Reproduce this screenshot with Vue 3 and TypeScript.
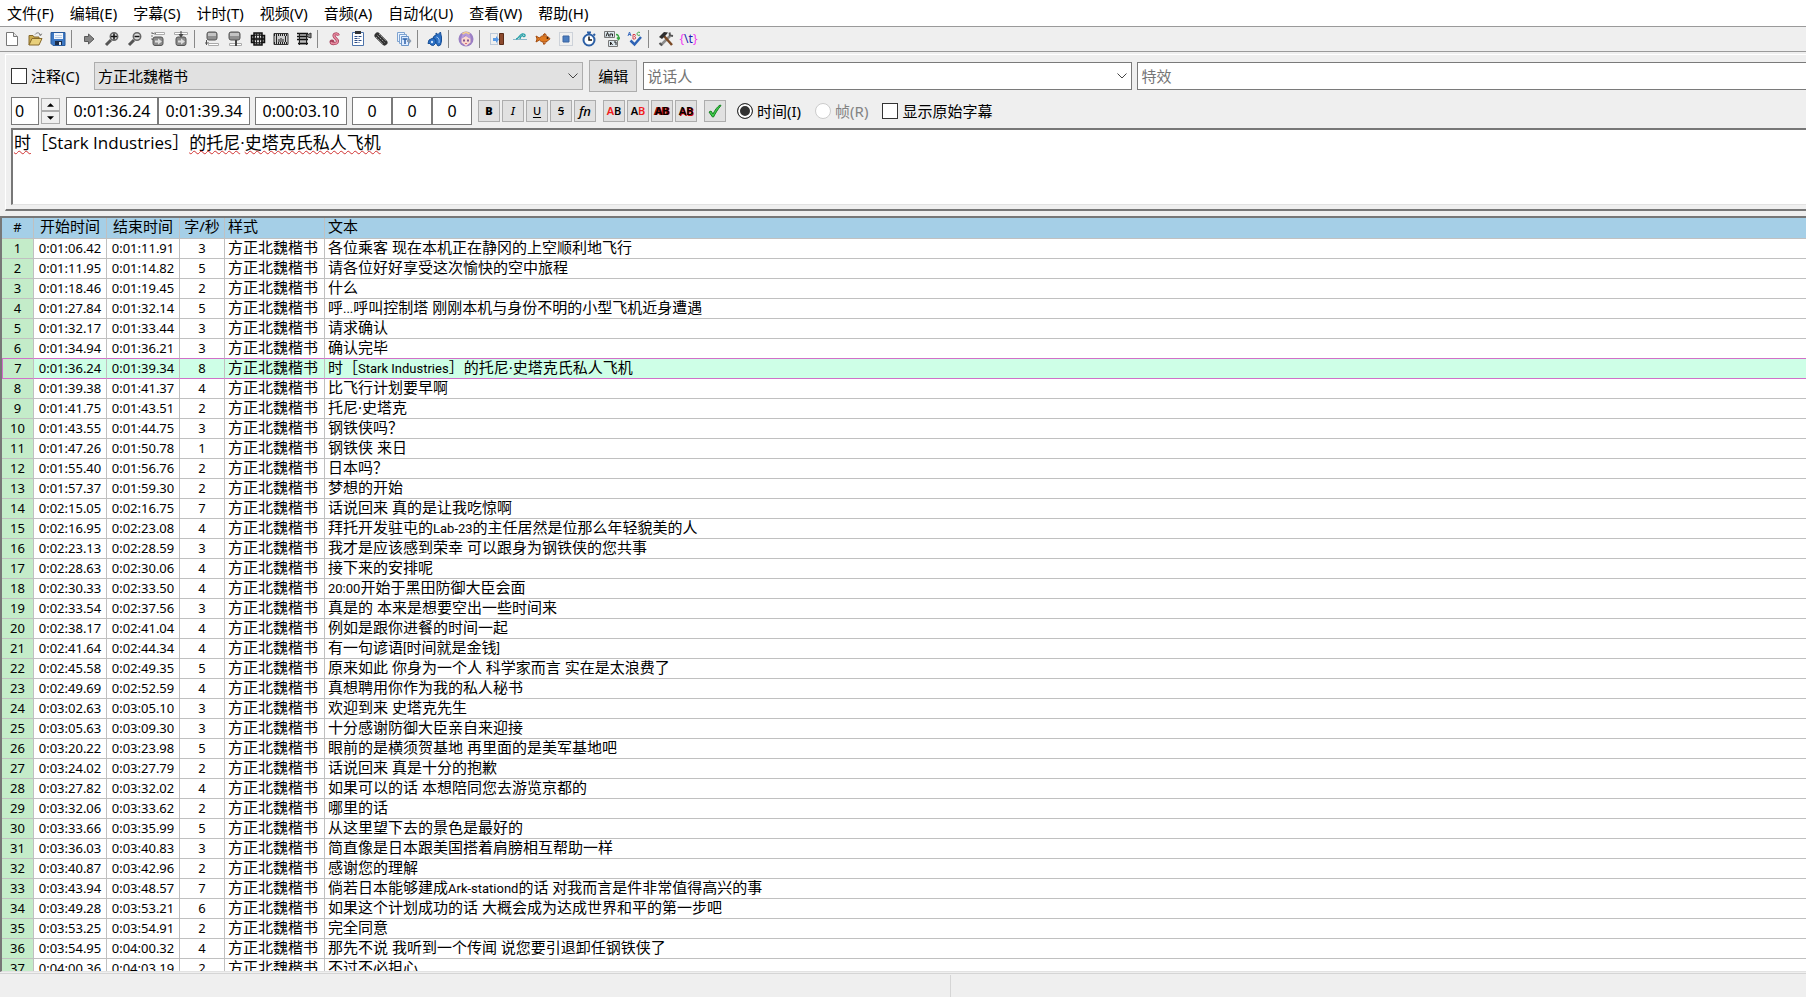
<script setup lang="ts">
import { computed, ref } from 'vue'

interface Line {
  start: string
  end: string
  cps: number
  text: string
}

interface Run {
  text: string
  latin: boolean
}

const STYLE_NAME = '方正北魏楷书'

const menus: string[] = ['文件(F)', '编辑(E)', '字幕(S)', '计时(T)', '视频(V)', '音频(A)', '自动化(U)', '查看(W)', '帮助(H)']

const raw: [string, string, number, string][] = [
  ['0:01:06.42', '0:01:11.91', 3, '各位乘客 现在本机正在静冈的上空顺利地飞行'],
  ['0:01:11.95', '0:01:14.82', 5, '请各位好好享受这次愉快的空中旅程'],
  ['0:01:18.46', '0:01:19.45', 2, '什么'],
  ['0:01:27.84', '0:01:32.14', 5, '呼...呼叫控制塔 刚刚本机与身份不明的小型飞机近身遭遇'],
  ['0:01:32.17', '0:01:33.44', 3, '请求确认'],
  ['0:01:34.94', '0:01:36.21', 3, '确认完毕'],
  ['0:01:36.24', '0:01:39.34', 8, '时［Stark Industries］的托尼·史塔克氏私人飞机'],
  ['0:01:39.38', '0:01:41.37', 4, '比飞行计划要早啊'],
  ['0:01:41.75', '0:01:43.51', 2, '托尼·史塔克'],
  ['0:01:43.55', '0:01:44.75', 3, '钢铁侠吗？'],
  ['0:01:47.26', '0:01:50.78', 1, '钢铁侠 来日'],
  ['0:01:55.40', '0:01:56.76', 2, '日本吗？'],
  ['0:01:57.37', '0:01:59.30', 2, '梦想的开始'],
  ['0:02:15.05', '0:02:16.75', 7, '话说回来 真的是让我吃惊啊'],
  ['0:02:16.95', '0:02:23.08', 4, '拜托开发驻屯的Lab-23的主任居然是位那么年轻貌美的人'],
  ['0:02:23.13', '0:02:28.59', 3, '我才是应该感到荣幸 可以跟身为钢铁侠的您共事'],
  ['0:02:28.63', '0:02:30.06', 4, '接下来的安排呢'],
  ['0:02:30.33', '0:02:33.50', 4, '20:00开始于黑田防御大臣会面'],
  ['0:02:33.54', '0:02:37.56', 3, '真是的 本来是想要空出一些时间来'],
  ['0:02:38.17', '0:02:41.04', 4, '例如是跟你进餐的时间一起'],
  ['0:02:41.64', '0:02:44.34', 4, '有一句谚语[时间就是金钱]'],
  ['0:02:45.58', '0:02:49.35', 5, '原来如此 你身为一个人 科学家而言 实在是太浪费了'],
  ['0:02:49.69', '0:02:52.59', 4, '真想聘用你作为我的私人秘书'],
  ['0:03:02.63', '0:03:05.10', 3, '欢迎到来 史塔克先生'],
  ['0:03:05.63', '0:03:09.30', 3, '十分感谢防御大臣亲自来迎接'],
  ['0:03:20.22', '0:03:23.98', 5, '眼前的是横须贺基地 再里面的是美军基地吧'],
  ['0:03:24.02', '0:03:27.79', 2, '话说回来 真是十分的抱歉'],
  ['0:03:27.82', '0:03:32.02', 4, '如果可以的话 本想陪同您去游览京都的'],
  ['0:03:32.06', '0:03:33.62', 2, '哪里的话'],
  ['0:03:33.66', '0:03:35.99', 5, '从这里望下去的景色是最好的'],
  ['0:03:36.03', '0:03:40.83', 3, '简直像是日本跟美国搭着肩膀相互帮助一样'],
  ['0:03:40.87', '0:03:42.96', 2, '感谢您的理解'],
  ['0:03:43.94', '0:03:48.57', 7, '倘若日本能够建成Ark-stationd的话 对我而言是件非常值得高兴的事'],
  ['0:03:49.28', '0:03:53.21', 6, '如果这个计划成功的话 大概会成为达成世界和平的第一步吧'],
  ['0:03:53.25', '0:03:54.91', 2, '完全同意'],
  ['0:03:54.95', '0:04:00.32', 4, '那先不说 我听到一个传闻 说您要引退卸任钢铁侠了'],
  ['0:04:00.36', '0:04:03.19', 2, '不过不必担心'],
]

const lines: Line[] = raw.map(([start, end, cps, text]) => ({ start, end, cps, text }))
const selected = ref(6)

const isComment = ref(false)
const showOriginal = ref(false)
const timeMode = ref('time')
const layer = ref('0')
const start = ref('0:01:36.24')
const end = ref('0:01:39.34')
const duration = ref('0:00:03.10')
const margins = ref(['0', '0', '0'])
const marginNames = ['左边距', '右边距', '垂直边距']
const editText = ref(lines[6].text)

// Latin runs are set smaller than the Chinese text around them.
function runs(text: string): Run[] {
  return (text.match(/[\x21-\x7e]+( [\x21-\x7e]+)*|[^\x21-\x7e]+/g) ?? []).map((t) => ({
    text: t,
    latin: /^[\x21-\x7e]/.test(t),
  }))
}

const spelling = computed(() =>
  (editText.value.match(/[\u4e00-\u9fff]+|[^\u4e00-\u9fff]+/g) ?? []).map((t) => ({
    text: t,
    bad: /^[\u4e00-\u9fff]/.test(t),
  })),
)

function select(i: number) {
  selected.value = i
  start.value = lines[i].start
  end.value = lines[i].end
  editText.value = lines[i].text
}

function step(d: number) {
  layer.value = String(Math.max(0, Number(layer.value) + d))
}
</script>

<template>
  <div class="app">
    <nav class="menubar">
      <button v-for="m in menus" :key="m" class="menu" type="button">{{ m }}</button>
    </nav>

    <div class="toolbar" role="toolbar">
      <button type="button" aria-label="新建"><svg viewBox="0 0 16 16"><path d="M2.500 1.500h7l4 4v9h-11z" fill="#fff" stroke="#777" /><path d="M9.500 1.500v4h4" fill="#e4e4e4" stroke="#777" /></svg></button>
      <button type="button" aria-label="打开"><svg viewBox="0 0 16 16"><path d="M2 14V4.500h4l1 1.500h5v2" fill="#c9a94c" stroke="#86692a" /><path d="M2 14l3-6.500h10L12 14z" fill="#e8cf7a" stroke="#86692a" /><path d="M8 3.500c2-2.500 4.500-2 5.500.5M12 3.500l1.700 1 1-1.800" fill="none" stroke="#777" /></svg></button>
      <button type="button" aria-label="保存"><svg viewBox="0 0 16 16"><path d="M1 1.500h14v13H3l-2-2z" fill="#3c78c4" stroke="#285a9c" /><path d="M4 2h9v6H4z" fill="#f2f6fb" /><path d="M5 4.500h7M5 6.500h7" stroke="#b9cde6" /><path d="M5 10h7v4H5z" fill="#1d2d48" /><path d="M9 11h2v3H9z" fill="#dfe8f2" /></svg></button>
      <i class="sep"></i>
      <button type="button" aria-label="跳转"><svg viewBox="0 0 16 16"><path d="M3.500 5.500h4V3l5.500 5-5.500 5v-2.500h-4z" fill="#858585" stroke="#5a5a5a" /></svg></button>
      <button type="button" aria-label="放大"><svg viewBox="0 0 16 16"><path d="M2 14l5-5" stroke="#555" stroke-width="3" /><circle cx="10" cy="5.500" r="3.700" fill="#ddd" stroke="#666" stroke-width="1.500" /><path d="M10 2.500v6M7 5.500h6" stroke="#111" stroke-width="1.500" /></svg></button>
      <button type="button" aria-label="缩小"><svg viewBox="0 0 16 16"><path d="M2 14l5-5" stroke="#555" stroke-width="3" /><circle cx="10" cy="5.500" r="3.700" fill="#ddd" stroke="#666" stroke-width="1.500" /><path d="M7.500 5.500h5" stroke="#111" stroke-width="1.500" /></svg></button>
      <button type="button" aria-label="跳到开始"><svg viewBox="0 0 16 16"><path d="M4.500 1.500h10v2h-10z" fill="#fff" stroke="#aaa" /><path d="M2 1v9M2 2.500h4M2 8.500h3" stroke="#777" stroke-dasharray="2 1" fill="none" /><rect x="3" y="6" width="10" height="8.500" rx="2" fill="#8b8b8b" stroke="#555" /><path d="M5 9.500h3v-2l4 3-4 3v-2H5z" fill="#ddd" /></svg></button>
      <button type="button" aria-label="跳到结束"><svg viewBox="0 0 16 16"><path d="M1.500 1.500h13v2h-13z" fill="#fff" stroke="#aaa" /><path d="M8 0v5M6 3l2 3 2-3" stroke="#444" fill="#444" /><rect x="3" y="6" width="10" height="8.500" rx="2" fill="#8b8b8b" stroke="#555" /><path d="M5 9.500h3v-2l4 3-4 3v-2H5z" fill="#ddd" /></svg></button>
      <i class="sep"></i>
      <button type="button" aria-label="开始对齐视频"><svg viewBox="0 0 16 16"><rect x="3" y="1" width="10" height="8" rx="2" fill="#909090" stroke="#555" /><path d="M4 2h8v3H4z" fill="#c4c4c4" /><path d="M2.500 9v5M1 12h4" stroke="#555" fill="none" /><path d="M4.500 12.500h10v2h-10z" fill="#fff" stroke="#aaa" /></svg></button>
      <button type="button" aria-label="结束对齐视频"><svg viewBox="0 0 16 16"><rect x="2" y="1" width="11" height="8" rx="2" fill="#909090" stroke="#555" /><path d="M3 2h9v3H3z" fill="#c4c4c4" /><path d="M2.500 12.500h12v2h-12z" fill="#fff" stroke="#aaa" /><path d="M9 9v6" stroke="#444" stroke-width="2" /></svg></button>
      <button type="button" aria-label="选择可见"><svg viewBox="0 0 16 16"><path d="M1.500 4.500h13v7h-13zM4 2h8v12H4z" fill="#999" stroke="#111" stroke-width="1.500" /><path d="M5 5.500h6M5 10.500h6" stroke="#ddd" stroke-width="1.500" /><path d="M2 8h12" stroke="#111" stroke-width="1.500" /><path d="M6.500 2v12M9.500 2v12" stroke="#222" /></svg></button>
      <button type="button" aria-label="对齐场景"><svg viewBox="0 0 16 16"><path d="M1 2.500h14v11H1z" fill="#ccc" stroke="#333" /><path d="M1 4h14M1 12h14" stroke="#222" stroke-width="2" stroke-dasharray="1 1" /><path d="M3.500 5v6M6 8v3M8 7v4M10 8v3M12.500 5v6" stroke="#222" /></svg></button>
      <button type="button" aria-label="平移到视频"><svg viewBox="0 0 16 16"><path d="M2.500 2h9v12h-9z" fill="#bbb" /><path d="M1 2.500h11M1 5.500h11M1 8.500h11M2 12.500h10" stroke="#111" stroke-width="1.500" /><path d="M3.500 2v12M10.500 2v12" stroke="#222" /><path d="M11 4l4-2v5l-3-1" fill="#888" stroke="#333" /></svg></button>
      <i class="sep"></i>
      <button type="button" aria-label="样式管理"><svg viewBox="0 0 16 16"><path d="M11.500 4.500c-1-2.500-5-2-4.500.5s4 3 3.500 5.500-6 3-6.500.5c0-1.500 2-1.500 2 0" fill="none" stroke="#a8405a" stroke-width="3" /><path d="M11.500 4.500c-1-2.500-5-2-4.500.5s4 3 3.500 5.500-6 3-6.500.5" fill="none" stroke="#e78aa0" stroke-width="1.500" /></svg></button>
      <button type="button" aria-label="属性"><svg viewBox="0 0 16 16"><path d="M2.500 1.500h11v13h-11z" fill="#fff" stroke="#4d73aa" /><path d="M5 0h6v3H5z" fill="#333" /><path d="M4.500 5.500h7M4.500 7.500h5M4.500 9.500h7M4.500 11.500h5" stroke="#2d4d86" stroke-dasharray="3 1" /></svg></button>
      <button type="button" aria-label="附件"><svg viewBox="0 0 16 16"><path d="M4.500 4.500l7 7" stroke="#333" stroke-width="6" stroke-linecap="round" /><path d="M4.500 4.500l7 7M6 3l7 7M3 6l7 7" stroke="#999" stroke-dasharray="2 1" /></svg></button>
      <button type="button" aria-label="字体收集"><svg viewBox="0 0 16 16"><path d="M1.500 1.500h7v9h-7z" fill="#eaf3ff" stroke="#7ea3d0" /><path d="M3.500 3.500h7v9h-7z" fill="#eaf3ff" stroke="#7ea3d0" /><path d="M5.500 5.500h7v9h-7z" fill="#dfecff" stroke="#6b94c7" /><path d="M6.500 8h5M9 8v5" stroke="#2c62ac" stroke-width="1.500" /><path d="M11 9h2V7l2.500 3-2.500 3v-2h-2z" fill="#8a9bb0" /></svg></button>
      <i class="sep"></i>
      <button type="button" aria-label="自动化"><svg viewBox="0 0 16 16"><g fill="#2a6fc4" stroke="#174e96" stroke-linejoin="round"><path d="M7 5l2-.5V2l2 1.500L13.500 1l.5 3 .5 2v4l-1 4-2.500 1-2-3-3-4z" /><path d="M2 9l2-1 2-1 2 1 1 2-.5 2.500-2 2-2.500-.5-1-1.500H1z" /></g><circle cx="5" cy="11" r="1.200" fill="#cfe3fb" /><path d="M9.500 6c2.500.5 3 3 2.500 6" fill="none" stroke="#9cc5f5" /></svg></button>
      <i class="sep"></i>
      <button type="button" aria-label="字幕助手"><svg viewBox="0 0 16 16"><circle cx="8" cy="8" r="7.500" fill="#9b7fc4" /><path d="M3.500 7.500L8 5l4.500 2.500v4L8 15l-4.500-3.500z" fill="#fbd9cf" /><path d="M4 2l4-1.500L12 2l-1 2H5z" fill="#f4d089" /><path d="M3 8c2-1 3-2 4-4 2 2 4 3 6 4l-1-4-4-2-4 2z" fill="#b79bdc" /><path d="M6 8.500v2M10 8.500v2" stroke="#5a2a7a" stroke-width="1.500" /><path d="M7 12.500h2" stroke="#d46b7b" /></svg></button>
      <i class="sep"></i>
      <button type="button" aria-label="时间平移"><svg viewBox="0 0 16 16"><path d="M1.500 2.500h7v11h-7z" fill="none" stroke="#8aa5c4" stroke-dasharray="1 1" /><path d="M4 7h3V5l3 3.500L7 12v-2H4z" fill="#5a9be6" /><path d="M10.500 2.500h4v11h-4z" fill="#8c4a2e" stroke="#5b2c18" /></svg></button>
      <button type="button" aria-label="波形处理"><svg viewBox="0 0 16 16"><path d="M1 8.500h14" stroke="#8bb7c9" /><path d="M4 8c3 0 3-4 6-5 2.500-.5 3.500 1 3 2-.5 1-2.500.5-2-.5M8 8c0-2 1-3 3-4" fill="none" stroke="#28a0a8" stroke-width="1.300" /></svg></button>
      <button type="button" aria-label="卡拉OK模板"><svg viewBox="0 0 16 16"><path d="M1 5l3.500 2c2-3 7-3.500 10.500.7-3.500 4.300-8 4.300-10.500 1.300L1 11l1-3z" fill="#e07a20" stroke="#a34c10" /><path d="M8 4l2-1.500 1.500 2M8 11.500l1 2 2-2" fill="#c8601a" stroke="#a34c10" /><circle cx="12.500" cy="7" r="1" fill="#3a1a05" /></svg></button>
      <button type="button" aria-label="分辨率"><svg viewBox="0 0 16 16"><path d="M1.500 1.500h13v13h-13z" fill="#f0f0f0" stroke="#aab4c2" stroke-dasharray="1 1" /><path d="M5 5h6v6H5z" fill="#4a7dc0" stroke="#3a64a0" /></svg></button>
      <button type="button" aria-label="后续计时"><svg viewBox="0 0 16 16"><circle cx="8" cy="9" r="5.500" fill="#fff" stroke="#2c5fa5" stroke-width="2" /><path d="M6 1.500h4M8 1v3M12.500 3l1.500 1.500" stroke="#2c5fa5" stroke-width="2" /><path d="M8 5.500V9h3" fill="none" stroke="#111" stroke-width="1.500" /></svg></button>
      <button type="button" aria-label="翻译助手"><svg viewBox="0 0 16 16"><path d="M.5.5h10v6H.5zM4.500 9.500h9v6h-9z" fill="#dce6ec" stroke="#777" /><path d="M2 5.500l1.500-4L5 5.500M6 5.500V3h2.500v2.500M6.500 14v-3l2 3M10 11h2v3" stroke="#222" fill="none" /><path d="M12 3.500c2 0 3 1.500 2.500 4.500M13 6.500l1.500 2 1.500-2" fill="none" stroke="#39a845" stroke-width="1.500" /></svg></button>
      <button type="button" aria-label="拼写检查"><svg viewBox="0 0 16 16"><path d="M3.500 9.500l4 4L14 6" fill="none" stroke="#2d62b5" stroke-width="2.500" /><path d="M1 5l1.500-4L4 5M1.500 3.500h2" stroke="#3a6cc0" fill="none" /><path d="M6 8V3.500h2c1 1 0 2-.5 2 1.500.5 1.500 2.500 0 2.500z" stroke="#d5404a" fill="none" /><path d="M13 1.500c-2-1-3 .5-3 1.500s1.500 2 3 1" stroke="#3fa548" fill="none" /></svg></button>
      <i class="sep"></i>
      <button type="button" aria-label="选项"><svg viewBox="0 0 16 16"><path d="M3 14L12 5" stroke="#8c8c8c" stroke-width="2.500" /><path d="M6 5l8 9" stroke="#7a4a26" stroke-width="2.500" /><path d="M1 6l5-5 4 .5L8 4 4 8z" fill="#2e2e2e" /><path d="M11.500 1.500L12 4.500l3 .5M1.500 12l2.500 2.500" fill="none" stroke="#555" stroke-width="2" /></svg></button>
      <button type="button" class="tag" aria-label="切换标签隐藏"><b>{</b>\t<b>}</b></button>
    </div>

    <section class="editor">
      <div class="fields">
        <label class="check comment"><input v-model="isComment" type="checkbox" />注释(C)</label>
        <div class="combo grey">
          <select aria-label="样式"><option>{{ STYLE_NAME }}</option></select>
          <svg class="chev" viewBox="0 0 10 6"><path d="M.5.5L5 5 9.500.5" /></svg>
        </div>
        <button class="edit" type="button">编辑</button>
        <div class="combo">
          <input type="text" placeholder="说话人" aria-label="说话人" />
          <svg class="chev" viewBox="0 0 10 6"><path d="M.5.5L5 5 9.500.5" /></svg>
        </div>
        <input class="effect" type="text" placeholder="特效" aria-label="特效" />
      </div>

      <div class="fields controls">
        <input v-model="layer" class="box layer" type="text" aria-label="层" />
        <div class="spin">
          <button type="button" aria-label="增加" @click="step(1)"><svg viewBox="0 0 8 4"><path d="M0 4l4-4 4 4z" /></svg></button>
          <button type="button" aria-label="减少" @click="step(-1)"><svg viewBox="0 0 8 4"><path d="M0 0l4 4 4-4z" /></svg></button>
        </div>
        <div class="group">
          <input v-model="start" class="box time" type="text" aria-label="开始时间" />
          <input v-model="end" class="box time" type="text" aria-label="结束时间" />
        </div>
        <div class="group">
          <input v-model="duration" class="box time" type="text" aria-label="持续时间" />
        </div>
        <div class="group">
          <input v-for="(n, i) in marginNames" :key="n" v-model="margins[i]" class="box margin" type="text" :aria-label="n" />
        </div>
        <div class="formats">
          <button type="button" class="bold">B</button>
          <button type="button" class="italic">I</button>
          <button type="button" class="under">U</button>
          <button type="button" class="strike">S</button>
          <button type="button" class="fn">fn</button>
        </div>
        <div class="formats">
          <button type="button"><em>A</em>B</button>
          <button type="button">A<em>B</em></button>
          <button type="button" class="glow">AB</button>
          <button type="button" class="shade">AB</button>
        </div>
        <div class="formats commit">
          <button type="button" aria-label="提交"><svg viewBox="0 0 14 14"><path d="M1 8l2-1 2 3c2-4 4-7 7-9l1 .5C10 5 7.500 9 5.500 13h-1z" fill="#3fce4b" stroke="#14801f" /></svg></button>
        </div>
        <label class="check first"><input v-model="timeMode" type="radio" name="mode" value="time" />时间(I)</label>
        <label class="check off"><input v-model="timeMode" type="radio" name="mode" value="frame" disabled />帧(R)</label>
        <label class="check"><input v-model="showOriginal" type="checkbox" />显示原始字幕</label>
      </div>

      <div class="textbox">
        <textarea v-model="editText" aria-label="字幕文本" spellcheck="false"></textarea>
        <div class="marks" aria-hidden="true"><span v-for="(s, i) in spelling" :key="i" :class="{ bad: s.bad }">{{ s.text }}</span></div>
      </div>
    </section>

    <main class="grid">
      <table>
        <colgroup>
          <col class="c-num" /><col class="c-time" /><col class="c-time" /><col class="c-cps" /><col class="c-style" /><col />
        </colgroup>
        <thead>
          <tr>
            <th class="mid small">#</th>
            <th class="mid">开始时间</th>
            <th class="mid">结束时间</th>
            <th class="mid">字/秒</th>
            <th>样式</th>
            <th>文本</th>
          </tr>
        </thead>
        <tbody>
          <tr v-for="(l, i) in lines" :key="i" :class="{ selected: i === selected }" @click="select(i)">
            <td class="num mid small">{{ i + 1 }}</td>
            <td class="mid small">{{ l.start }}</td>
            <td class="mid small">{{ l.end }}</td>
            <td class="mid small">{{ l.cps }}</td>
            <td>{{ STYLE_NAME }}</td>
            <td><span v-for="(r, k) in runs(l.text)" :key="k" :class="{ latin: r.latin }">{{ r.text }}</span></td>
          </tr>
        </tbody>
      </table>
    </main>

    <footer class="status"><span></span><span></span></footer>
  </div>
</template>

<style>
html,
body {
  margin: 0;
  overflow: hidden;
}
</style>

<style scoped>
.app {
  display: flex;
  flex-direction: column;
  height: 100vh;
  background: #efefef;
  color: #000;
  font: 15px/20px "Noto Sans", "Noto Sans CJK SC", sans-serif;
}

.app *,
.app *::before {
  box-sizing: border-box;
}

button,
input,
select,
textarea {
  margin: 0;
  padding: 0;
  border: 0;
  border-radius: 0;
  outline: none;
  background: none;
  color: inherit;
  font: inherit;
}

.menubar {
  display: flex;
  flex: none;
  height: 27px;
  background: #fff;
  border-bottom: 1px solid #9a9a9a;
}

.menu {
  padding: 3px 9px 3px 7px;
}

.toolbar {
  display: flex;
  flex: none;
  align-items: center;
  height: 25px;
  border-bottom: 1px solid #9a9a9a;
}

.toolbar button {
  display: flex;
  flex: none;
  align-items: center;
  justify-content: center;
  width: 23px;
  height: 24px;
}

.toolbar svg {
  width: 16px;
  height: 16px;
}

.toolbar .tag {
  color: #1a1ab0;
  font-size: 12px;
}

.tag b {
  color: #f03cf0;
  font-weight: 400;
}

.sep {
  flex: none;
  width: 8px;
  height: 18px;
}

.sep::before {
  display: block;
  width: 1px;
  height: 18px;
  margin-left: 2px;
  background: #888;
  content: "";
}

.editor {
  flex: none;
  margin: 2px 0 5px 5px;
  padding: 5px 0 4px 5px;
  border-top: 1px solid #fff;
  border-left: 1px solid #fff;
  border-bottom: 2px solid #777;
}

.fields {
  display: flex;
  align-items: center;
}

.check {
  display: flex;
  align-items: center;
  gap: 4px;
  margin-right: 14px;
}

.check input {
  width: 16px;
  height: 16px;
  appearance: none;
  background: #fff;
  border: 1px solid #333;
}

.check input[type="radio"] {
  border-radius: 50%;
}

.check input:checked {
  background: #333;
  box-shadow: inset 0 0 0 2px #fff;
}

.check input:disabled {
  border-color: #ccc;
}

.off {
  color: #838383;
}

.comment {
  width: 83px;
  margin: 0;
}

.combo {
  position: relative;
  display: flex;
  flex: 489 1 0;
  height: 28px;
  background: #fff;
  border: 1px solid #7a7a7a;
}

.grey {
  background: #e1e1e1;
  border-color: #adadad;
}

.combo select,
.combo input {
  flex: 1;
  min-width: 0;
  padding: 0 3px;
  appearance: none;
}

.chev {
  position: absolute;
  top: 10px;
  right: 4px;
  width: 10px;
  height: 6px;
  fill: none;
  stroke: #444;
  pointer-events: none;
}

::placeholder {
  color: #757575;
  opacity: 1;
}

.edit {
  width: 48px;
  height: 32px;
  margin: 0 6px;
  background: #e1e1e1;
  border: 1px solid #adadad;
}

.effect {
  flex: 664 1 0;
  min-width: 0;
  height: 28px;
  margin-left: 5px;
  padding: 0 3px;
  background: #fff;
  border: 1px solid #7a7a7a;
  border-right: 0;
}

.controls {
  margin: 5px 0 3px;
}

.box {
  height: 28px;
  background: #fff;
  border: 1px solid #7a7a7a;
  font-size: 16px;
}

.layer {
  width: 28px;
  padding-left: 3px;
}

.spin {
  display: flex;
  flex-direction: column;
  width: 19px;
  margin: 0 6px 0 2px;
}

.spin button {
  display: flex;
  align-items: center;
  justify-content: center;
  height: 13px;
  background: #f0f0f0;
  border: 1px solid #adadad;
}

.spin svg {
  width: 7px;
  height: 4px;
}

.group {
  display: flex;
  margin-right: 5px;
}

.time {
  width: 92px;
  text-align: center;
}

.margin {
  width: 40px;
  text-align: center;
}

.formats {
  display: flex;
  gap: 2px;
  margin: 0 6px 0 1px;
}

.formats button {
  display: flex;
  align-items: center;
  justify-content: center;
  width: 22px;
  height: 22px;
  background: #e1e1e1;
  border: 1px solid #adadad;
  font-size: 11px;
  font-weight: 600;
}

.formats em {
  color: #f01c1c;
  font-style: normal;
}

.formats svg {
  width: 14px;
  height: 14px;
}

.formats .bold {
  font-weight: 900;
}

.formats .italic {
  font-style: italic;
  font-weight: 500;
}

.formats .under {
  font-weight: 500;
  text-decoration: underline;
  text-underline-offset: 2px;
}

.formats .strike {
  font-weight: 500;
  text-decoration: line-through;
}

.formats .fn {
  font-size: 13px;
  font-style: italic;
  font-weight: 500;
}

.formats .glow {
  text-shadow: 1px 0 #a00, -1px 0 #a00;
}

.formats .shade {
  text-shadow: 1px 1px #c00;
}

.first {
  margin-left: 5px;
}

.textbox {
  position: relative;
  height: 77px;
  background: #fff;
  border-top: 2px solid #777;
  border-left: 2px solid #777;
  border-bottom: 1px solid #e2e2e2;
}

.textbox textarea,
.marks {
  display: block;
  width: 100%;
  height: 100%;
  padding: 1px;
  font-family: "Open Sans", "Noto Sans CJK SC", sans-serif;
  font-size: 17px;
  line-height: 24px;
  resize: none;
  white-space: pre-wrap;
}

.marks {
  position: absolute;
  top: 0;
  left: 0;
  color: transparent;
  pointer-events: none;
}

.bad {
  text-decoration: underline wavy #d03030 1px;
  text-decoration-skip-ink: none;
  text-underline-offset: 1px;
}

.grid {
  flex: 1;
  min-height: 0;
  overflow: hidden;
  background: #fff;
  border-top: 2px solid #777;
  border-left: 2px solid #777;
  border-bottom: 1px solid #e2e2e2;
}

table {
  width: 100%;
  border-spacing: 0;
  table-layout: fixed;
}

.c-num {
  width: 32px;
}

.c-time {
  width: 73px;
}

.c-cps {
  width: 45px;
}

.c-style {
  width: 100px;
}

th,
td {
  height: 20px;
  padding: 0 0 0 3px;
  border-right: 1px solid #c0c0c0;
  border-bottom: 1px solid #c0c0c0;
  font-weight: 400;
  line-height: 17px;
  text-align: left;
  vertical-align: top;
  white-space: nowrap;
}

th {
  height: 21px;
  background: #a5cfe7;
}

th:last-child,
td:last-child {
  border-right: 0;
}

.mid {
  padding: 0;
  text-align: center;
}

.small {
  font-size: 13px;
  line-height: 19px;
}

td span {
  line-height: 1;
}

.latin {
  font-family: Roboto, "Open Sans", sans-serif;
  font-size: 13px;
}

.num {
  background: #c4ecc9;
}

.selected td {
  background: #ceffe7;
}

.selected .num {
  background: #c4ecc9;
  border-left: 1px solid #d070c8;
}

.selected td,
tr:has(+ .selected) td {
  border-bottom-color: #d070c8;
}

.status {
  display: flex;
  flex: none;
  height: 24px;
  margin-top: 1px;
  border-top: 1px solid #d5d5d5;
}

.status span {
  margin-top: 1px;
}

.status span:first-child {
  flex: 10 1 0;
  border-right: 1px solid #d5d5d5;
}

.status span:last-child {
  flex: 9 1 0;
}
</style>
